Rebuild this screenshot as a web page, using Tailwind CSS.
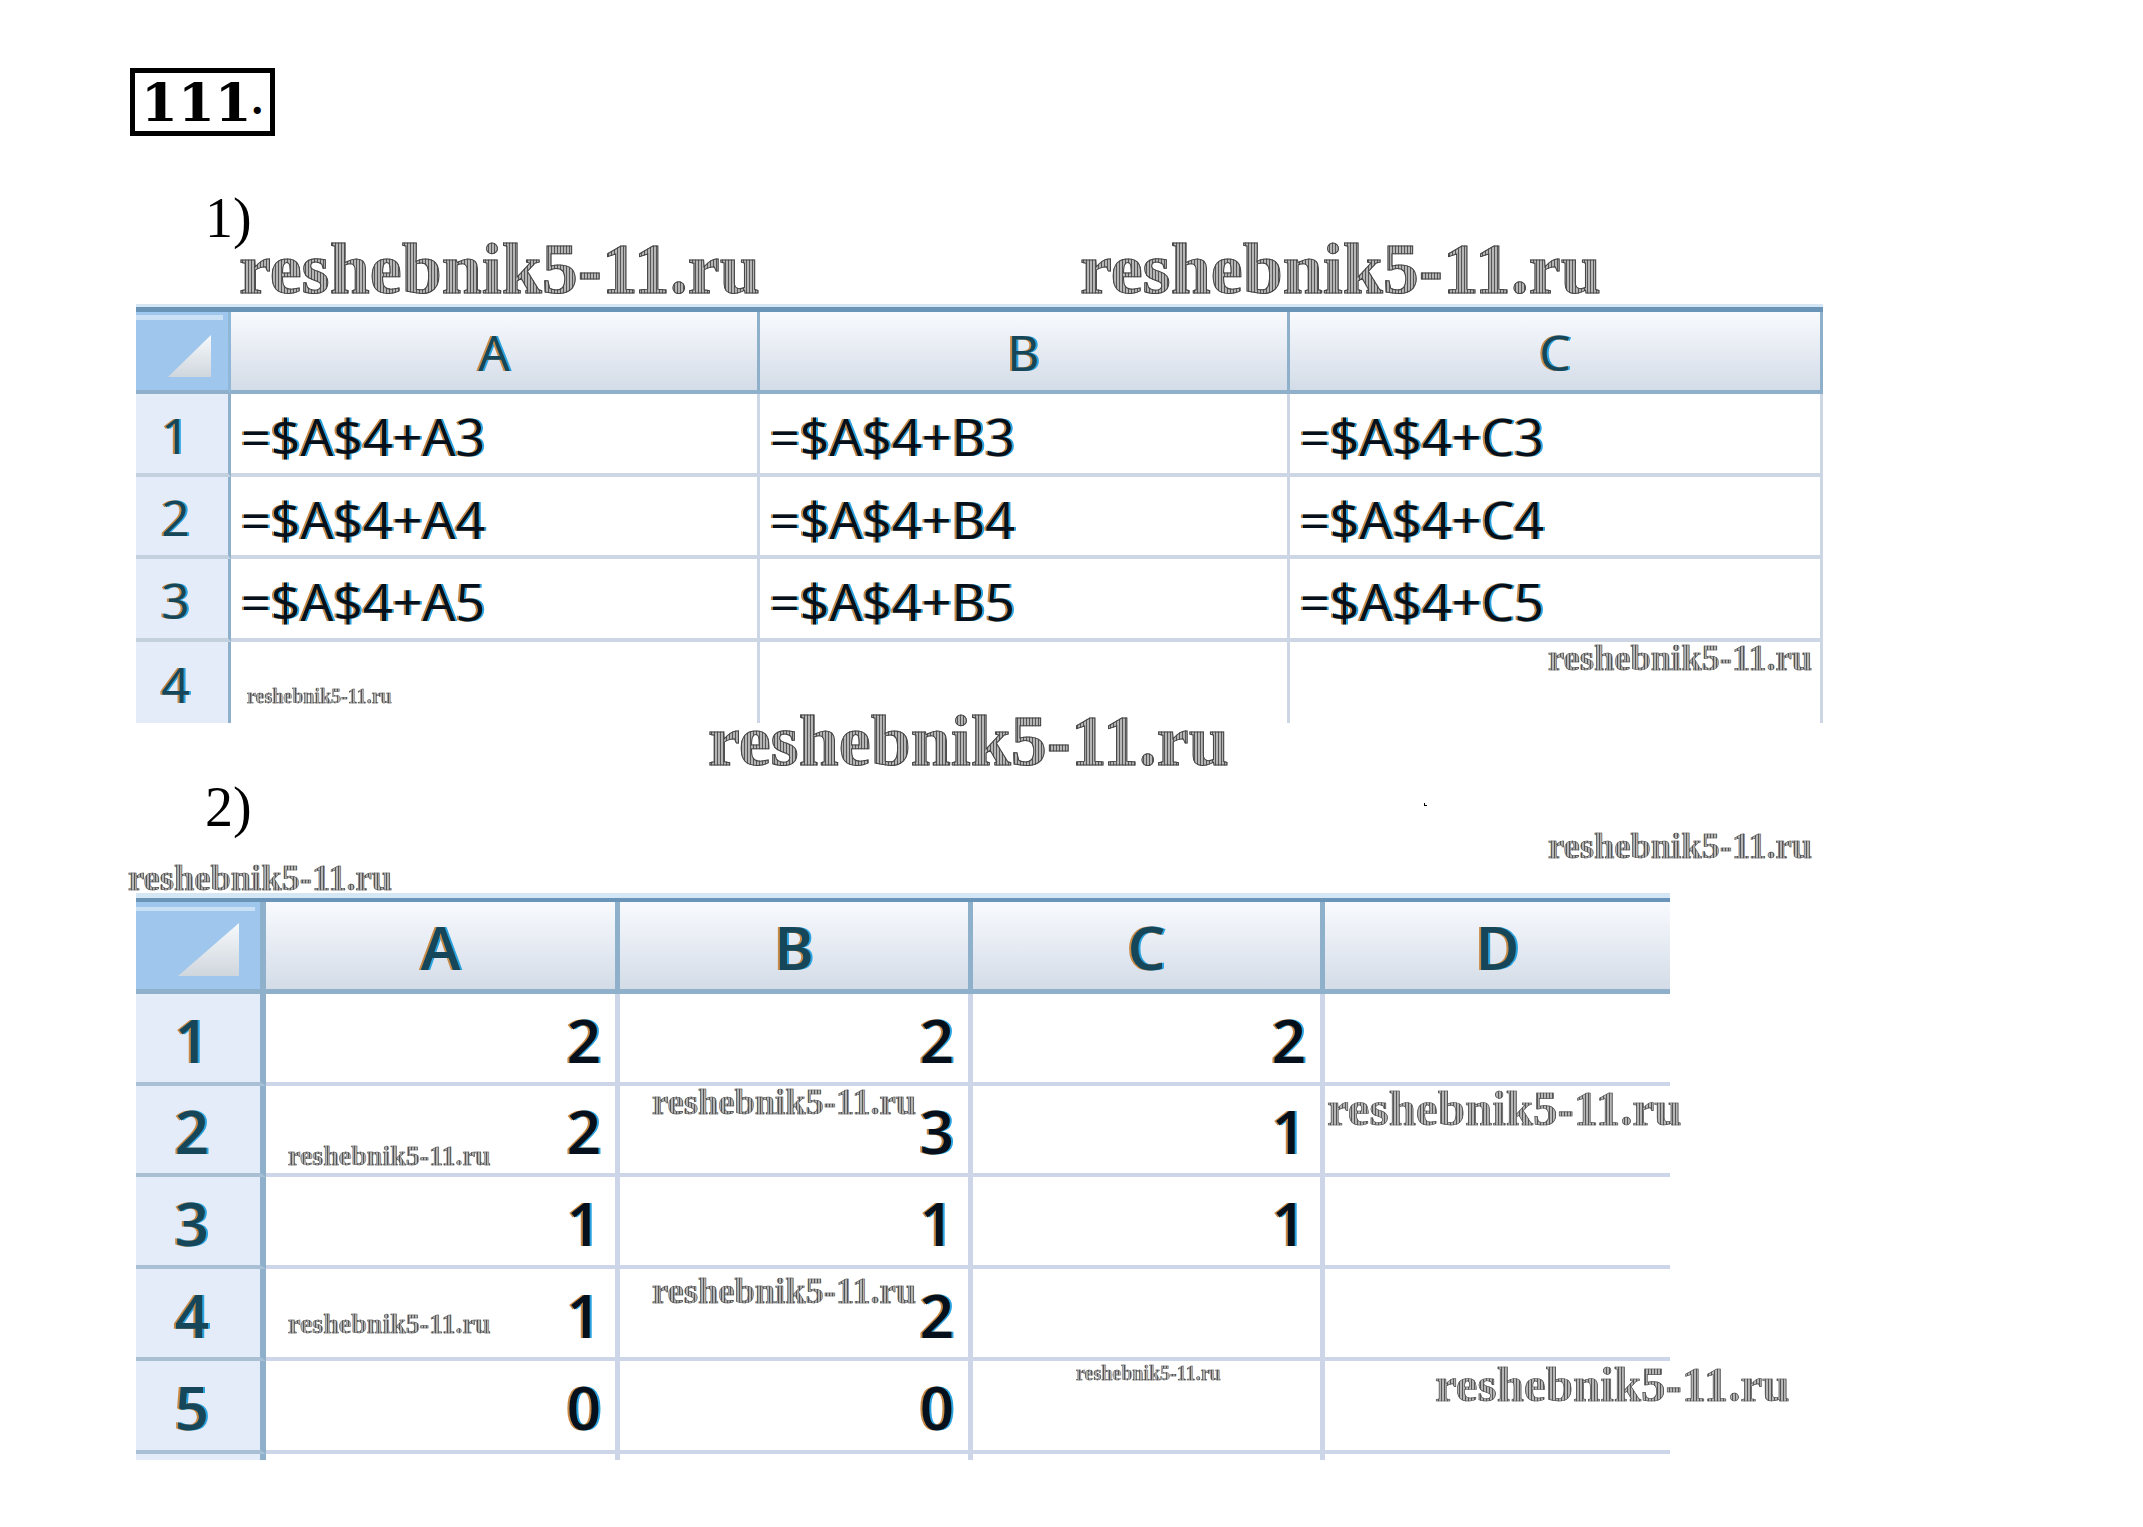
<!DOCTYPE html>
<html lang="en">
<head>
  <meta charset="utf-8" />
  <title>111</title>
  <script src="https://cdn.jsdelivr.net/npm/@tailwindcss/browser@4"></script>
</head>
<body class="bg-white">
  <div class="relative w-[2143px] h-[1527px] overflow-hidden pt-[68px]">
    <!-- Task number -->
    <div class="ml-[130px] w-[145px] h-[68px] border-[5px] border-black flex items-center pl-[6px] font-['DejaVu_Serif',serif] font-bold text-[53px] leading-none text-black">111<span class="font-['Liberation_Serif',serif] font-bold text-[44px] self-end pb-[9px]">.</span></div>

    <!-- Table 1 -->
    <div class="ml-[205px] mt-[54px] h-[56px] font-['Liberation_Serif',serif] text-[56px] leading-none text-black">1)</div>
    <div id="table1" class="ml-[136px] mt-[58px] w-[1687px] border-t-[3px] border-[#d5e6f5]">
      <div class="border-t-[5px] border-[#6a95b8] grid grid-cols-[95px_529px_530px_533px] grid-rows-[82px_83px_82px_83px_81px]" id="grid1"></div>
    </div>

    <!-- Table 2 -->
    <div class="ml-[205px] mt-[56px] h-[56px] font-['Liberation_Serif',serif] text-[56px] leading-none text-black">2)</div>
    <div id="table2" class="ml-[136px] mt-[58px] w-[1534px] border-t-[5px] border-[#d5e6f5]">
      <div class="border-t-[4px] border-[#6a95b8] grid grid-cols-[130px_354px_353px_352px_345px] grid-rows-[92px_92px_91px_92px_92px_93px_6px]" id="grid2"></div>
    </div>

    <!-- Stray speck -->
    <div class="absolute left-[1424px] top-[803px] w-[3px] h-[3px] border-l border-b border-black"></div>
    <div id="marks"></div>
  </div>

<script>
  const corner1 = `
    <div class="relative bg-[#9fc6ec] border-r-[3px] border-b-[4px] border-r-[#8fb8d8] border-b-[#8fb0cb]">
      <div class="absolute left-0 top-[3px] w-[87px] h-[5px] bg-[#c9e0f5]"></div>
      <div class="absolute left-[32px] top-[23px] w-[43px] h-[42px] bg-gradient-to-b from-[#f7fafc] to-[#cfd6dd] [clip-path:polygon(100%_0,100%_100%,0_100%)]"></div>
    </div>`;
  const corner2 = `
    <div class="relative bg-[#9fc6ec] border-r-[6px] border-b-[5px] border-r-[#8fb0cb] border-b-[#8fb0cb]">
      <div class="absolute left-0 top-[5px] w-[119px] h-[4px] bg-[#c9e0f5]"></div>
      <div class="absolute left-[42px] top-[21px] w-[61px] h-[53px] bg-gradient-to-b from-[#f7fafc] to-[#cfd6dd] [clip-path:polygon(100%_0,100%_100%,0_100%)]"></div>
    </div>`;

  const fringe = "font-['Open_Sans',sans-serif] [text-shadow:-2px_0_0_#c98a45,2px_0_0_#2aa3e0]";

  // table 1: formulas
  let html1 = corner1;
  ["A", "B", "C"].forEach(c => {
    html1 += `<div class="flex items-center justify-center pt-[3px] bg-gradient-to-b from-[#f8fafd] via-[#e6ebf3] to-[#d3dce7] border-r-[3px] border-b-[4px] border-[#8fb0cb] text-[50px] text-[#15465a] ${fringe}">${c}</div>`;
  });
  [1, 2, 3, 4].forEach(r => {
    const last = r === 4;
    html1 += `<div class="flex items-center justify-center pr-[13px] pt-[3px] bg-[#e3ecf8] border-r-[3px] border-[#8fb0cb] ${last ? "" : "border-b-[4px] border-b-[#c3d0de]"} text-[50px] text-[#15465a] ${fringe}">${r}</div>`;
    ["A", "B", "C"].forEach(c => {
      const text = last ? "" : `=$A$4+${c}${r + 2}`;
      html1 += `<div class="flex items-center pl-[10px] pt-[5px] bg-white border-r-[3px] border-[#ccd6e4] ${last ? "" : "border-b-[4px]"} text-[52px] text-[#05101c] ${fringe}">${text}</div>`;
    });
  });
  document.getElementById("grid1").innerHTML = html1;

  // table 2: values
  const values = [
    [2, 2, 2, ""],
    [2, 3, 1, ""],
    [1, 1, 1, ""],
    [1, 2, "", ""],
    [0, 0, "", ""],
  ];
  let html2 = corner2;
  ["A", "B", "C", "D"].forEach((c, i) => {
    html2 += `<div class="flex items-center justify-center pt-[3px] bg-gradient-to-b from-[#f8fafd] via-[#e6ebf3] to-[#d3dce7] border-b-[5px] border-[#8fb0cb] ${i < 3 ? "border-r-[5px]" : ""} text-[60px] font-semibold text-[#15465a] ${fringe}">${c}</div>`;
  });
  values.forEach((row, r) => {
    html2 += `<div class="flex items-center justify-center pr-[12px] pt-[3px] bg-[#e3ecf8] border-r-[6px] border-b-[4px] border-r-[#8fb0cb] border-b-[#a9bfd3] text-[60px] font-semibold text-[#15465a] ${fringe}">${r + 1}</div>`;
    row.forEach((v, i) => {
      html2 += `<div class="flex items-center justify-end pr-[14px] pt-[3px] bg-white border-b-[4px] border-[#ccd6e8] ${i < 3 ? "border-r-[5px]" : ""} text-[60px] font-semibold text-[#05101c] ${fringe}">${v}</div>`;
    });
  });
  // stubs of the grid lines under the last row
  html2 += `<div class="bg-[#e3ecf8] border-r-[6px] border-[#8fb0cb]"></div>`;
  [0, 1, 2, 3].forEach(i => {
    html2 += `<div class="${i < 3 ? "border-r-[5px]" : ""} border-[#ccd6e8]"></div>`;
  });
  document.getElementById("grid2").innerHTML = html2;

  // watermarks stamped over the page
  const stamp = "absolute whitespace-nowrap leading-none font-['Liberation_Serif',serif] font-bold text-transparent bg-clip-text bg-[repeating-linear-gradient(90deg,#555_0,#555_1px,#b5b5b5_1px,#b5b5b5_3px)]";
  const marks = [
    "left-[239px] top-[233px] text-[72px] [-webkit-text-stroke:1px_#444]",
    "left-[1080px] top-[233px] text-[72px] [-webkit-text-stroke:1px_#444]",
    "left-[708px] top-[705px] text-[72px] [-webkit-text-stroke:1px_#444]",
    "left-[247px] top-[686px] text-[20px] [-webkit-text-stroke:0.4px_#555]",
    "left-[1548px] top-[640px] text-[36.5px] [-webkit-text-stroke:0.6px_#555]",
    "left-[1548px] top-[828px] text-[36.5px] [-webkit-text-stroke:0.6px_#555]",
    "left-[128px] top-[860px] text-[36.5px] [-webkit-text-stroke:0.6px_#555]",
    "left-[288px] top-[1142px] text-[28px] [-webkit-text-stroke:0.5px_#555]",
    "left-[652px] top-[1084px] text-[36.5px] [-webkit-text-stroke:0.6px_#555]",
    "left-[288px] top-[1310px] text-[28px] [-webkit-text-stroke:0.5px_#555]",
    "left-[652px] top-[1273px] text-[36.5px] [-webkit-text-stroke:0.6px_#555]",
    "left-[1327px] top-[1084px] text-[49px] [-webkit-text-stroke:0.7px_#555]",
    "left-[1435px] top-[1360px] text-[49px] [-webkit-text-stroke:0.7px_#555]",
    "left-[1076px] top-[1363px] text-[20px] [-webkit-text-stroke:0.4px_#555]",
  ];
  document.getElementById("marks").innerHTML = marks
    .map(m => `<div class="${stamp} ${m}">reshebnik5-11.ru</div>`)
    .join("");
</script>
</body>
</html>
